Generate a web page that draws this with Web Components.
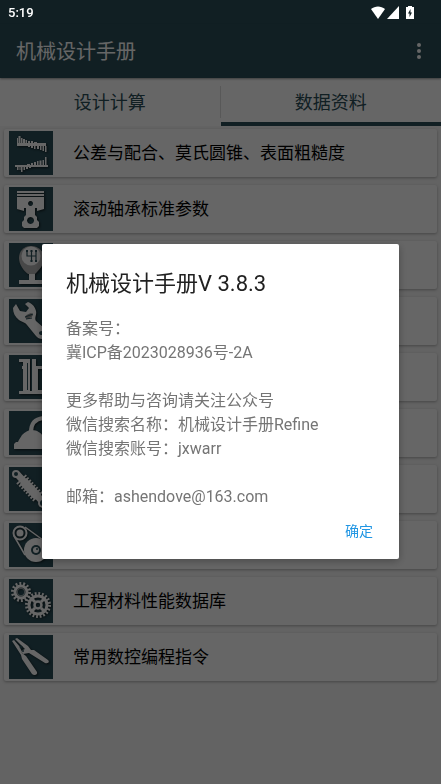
<!DOCTYPE html>
<html lang="zh-CN">
<head>
<meta charset="utf-8">
<meta name="viewport" content="width=device-width, initial-scale=1">
<title>机械设计手册</title>
<style>
  :root {
    --primary: #2b4e58;
    --surface: #ffffff;
    --page: #f7f7f7;
    --accent: #2196e3;
  }
  body {
    margin: 0;
    min-height: 100vh;
    background: var(--page);
    font-family: Roboto, "Noto Sans CJK SC", sans-serif;
  }
  main {
    display: flex;
    flex-direction: column;
    gap: 8px;
    padding: 3px 4px;
  }
</style>
</head>
<body>
<status-bar>5:19</status-bar>
<app-bar>机械设计手册</app-bar>
<tab-strip>
  <tab-item>设计计算</tab-item>
  <tab-item selected>数据资料</tab-item>
</tab-strip>
<main>
  <handbook-row icon="tolerance">公差与配合、莫氏圆锥、表面粗糙度</handbook-row>
  <handbook-row icon="piston">滚动轴承标准参数</handbook-row>
  <handbook-row icon="shifter"></handbook-row>
  <handbook-row icon="wrench"></handbook-row>
  <handbook-row icon="profile"></handbook-row>
  <handbook-row icon="eyebolt"></handbook-row>
  <handbook-row icon="shock"></handbook-row>
  <handbook-row icon="belt"></handbook-row>
  <handbook-row icon="gears">工程材料性能数据库</handbook-row>
  <handbook-row icon="pliers">常用数控编程指令</handbook-row>
</main>
<message-dialog>
  <span slot="title">机械设计手册V 3.8.3</span>
  <div>备案号：</div>
  <div>冀ICP备2023028936号-2A</div>
  <br>
  <div>更多帮助与咨询请关注公众号</div>
  <div>微信搜索名称：机械设计手册Refine</div>
  <div>微信搜索账号：jxwarr</div>
  <br>
  <div>邮箱：ashendove@163.com</div>
  <span slot="action">确定</span>
</message-dialog>

<script>
// 44x44 drawings, one per row
const ICONS = {
  tolerance: `
    <path d="M8 12h29v3H8zM6 34h33v2H6z"/>
    <path d="M8 7h1v5H8zM9.500 5h2v7h-2zM12 7h1.500v5H12zM14 8h2v4h-2zM16.500 9H18v3h-1.500zM19 10h2v2h-2zM22 10h2v2h-2zM25 11h3v1h-3z"/>
    <path d="M19 15h2v1h-2zM22 15h2v2h-2zM25 15h1.500v3H25zM28 15h2v3h-2zM31 15h1.500v4H31zM33.500 15h1.500v5h-1.500zM36 15h1.500v6H36z"/>
    <path d="M18 33h3v1h-3zM22 32h2v2h-2zM25 31h2v3h-2zM28 30h1.500v4H28zM30.500 29.500h2V34h-2zM33.500 29h1.500v5h-1.500zM36 26h1.500v8H36z"/>
    <path d="M8 36h1.500v3H8zM10.500 36h1v3h-1zM12 36h1.500v5H12zM14.500 36H16v3h-1.500zM17 36h2v2h-2zM20 36h2v1h-2z"/>`,
  piston: `
    <path d="M8 4h27v2H8zM8 7h27v2H8z"/>
    <path fill-rule="evenodd" d="M8 10h27v12l-7 2v-3h-2v7l2 2v3l2 2v4l-2 2H15l-2-2v-4l2-2v-3l2-2v-7h-2v3l-7-2zM21.500 14a2.500 2.500 0 1 0 .1 0zM21.500 30a3.500 3.500 0 1 0 .1 0z"/>`,
  shifter: `
    <path fill="#b5b5b5" d="M22 3c8 0 13 6 13 12 0 7-5 12-9 16h-7c-4-3-9-9-9-16 0-6 4-12 12-12z"/>
    <circle cx="22" cy="13" r="9.500"/>
    <path d="M20 31h6v6h10v4H10v-4h10z"/>
    <path class="cut" stroke-width="1.200" d="M18 8v5h9M22.500 8v10M27 8v10"/>
    <path class="hole" d="M17 7h2v2h-2zM21.500 7h2v2h-2zM26 7h2v2h-2zM21.500 17h2v2h-2zM26 17h2v2h-2z"/>`,
  wrench: `
    <path d="M7 5 4 9c0 5 2 9 6 12 3 2 6 2 8 5l9 11c3 4 9 4 11 0 1-3 0-6-3-8l-8-7c-2-3 1-6 0-10-1-4-3-7-8-9l-3 2 4 4-3 4-6-1z"/>
    <ellipse cx="20" cy="17" rx="4" ry="2" transform="rotate(-25 20 17)" fill="#888"/>
    <path class="cut" d="M16 18l8-3M17 20l6-1"/>
    <ellipse class="hole" cx="33" cy="34" rx="3" ry="2"/>`,
  profile: `
    <path d="M10 4h11v32h1V4h5v7h7v3h-5v21h5v4H10v-3h4V14h-1v-3h1V7h-4z"/>
    <path class="hole" d="M18 8h1v27h-1zM22 4h1v32h-1z"/>`,
  eyebolt: `
    <path d="M5 38v-5l2-2h2c1-3 3-5 4-7 3-3 6-5 10-5 5 0 9 3 11 6 2 2 3 4 4 6h6v7z"/>
    <path d="M22 21C22 13 26 8 34 7" fill="none" stroke="#fff" stroke-width="4"/>`,
  shock: `
    <path d="M8 7l24 26" stroke="#fff" stroke-width="7"/>
    <path d="M14 14l15 16" stroke="#fff" stroke-width="9"/>
    <path d="M12 12l17 18" stroke="#fff" stroke-width="13" stroke-dasharray="1.800 1.500"/>
    <circle cx="7" cy="7" r="4"/><circle class="hole" cx="7" cy="7" r="2"/>
    <circle cx="34" cy="36" r="5"/><circle class="hole" cx="34" cy="36" r="3"/>`,
  belt: `
    <circle cx="11" cy="10" r="6.500" fill="none" stroke="#fff" stroke-width="2"/>
    <circle cx="11" cy="10" r="3.500"/>
    <circle cx="27" cy="27" r="12"/>
    <path d="M5 13l11 19M16 4l18 13" fill="none" stroke="#fff" stroke-width="1.500"/>
    <circle class="hole" cx="27" cy="27" r="5"/>
    <circle cx="27" cy="27" r="3"/><circle class="hole" cx="28" cy="26" r="1"/>`,
  gears: `
    <g fill="none" stroke="#fff">
      <circle cx="12" cy="13" r="6" stroke-width="3"/>
      <circle cx="12" cy="13" r="8.500" stroke-width="3" stroke-dasharray="1.900 1.915"/>
      <circle cx="12" cy="13" r="3.800" stroke-width=".6"/>
      <circle cx="29" cy="26" r="9" stroke-width="3"/>
      <circle cx="29" cy="26" r="11.500" stroke-width="3" stroke-dasharray="1.800 1.813"/>
      <circle cx="29" cy="26" r="3.500" stroke-width="2.500"/>
      <path stroke-width="3" d="M22 19l4 4M32 29l4 4M36 19l-4 4M26 29l-4 4"/>
    </g>`,
  pliers: `
    <path d="M3 6l2-1 6 7 2 6 4 3 11 16c1 3-3 4-5 2L13 24l-1-4z"/>
    <path d="M6 4l2-1 11 8 3 4h3l14 10c2 2 0 4-3 3L20 18l-6 1-2-3 4-2-3-3z"/>
    <circle class="hole" cx="12" cy="12" r="1.500"/><circle class="hole" cx="14" cy="16" r="1"/>`
};

class StatusBar extends HTMLElement {
  constructor() {
    super();
    this.attachShadow({ mode: 'open' });
    this.shadowRoot.innerHTML = `
      <style>
        :host {
          display: block;
          background: var(--primary);
          height: 24px;
        }
        /* the clock and signals stay bright above the scrim */
        .bar {
          position: relative;
          z-index: 3;
          display: flex;
          align-items: center;
          justify-content: space-between;
          height: 24px;
          padding: 0 27px 0 8px;
          color: #fff;
          font-size: 13px;
          font-weight: 500;
        }
        .signals { display: flex; align-items: center; gap: 2px; }
        svg { display: block; fill: #fff; }
        svg:last-child { margin-left: 5px; }
      </style>
      <div class="bar">
        <slot></slot>
        <div class="signals">
          <svg width="14" height="13" viewBox="0 0 14 13"><path d="M0 3C4-.5 10-.5 14 3L7 13z"/></svg>
          <svg width="12" height="13" viewBox="0 0 12 13"><path d="M12 0v13H0z"/></svg>
          <svg width="8" height="13" viewBox="0 0 8 13"><path fill-rule="evenodd" d="M2 0h4v1h2v12H0V1h2zM4.500 3 2 7.500h1.500V11L6 6.500H4.500z"/></svg>
        </div>
      </div>
    `;
  }
}

class AppBar extends HTMLElement {
  constructor() {
    super();
    this.attachShadow({ mode: 'open' });
    this.shadowRoot.innerHTML = `
      <style>
        :host {
          display: flex;
          align-items: center;
          justify-content: space-between;
          height: 54px;
          padding: 0 12px 0 16px;
          background: var(--primary);
          box-shadow: 0 1px 2px rgba(0, 0, 0, .4);
          position: relative;
        }
        h1 {
          margin: 0;
          padding-top: 2px;
          color: #fff;
          font-size: 20px;
          font-weight: 400;
          line-height: 24px;
        }
        button {
          display: flex;
          width: 20px;
          height: 32px;
          padding: 0;
          border: 0;
          background: none;
          align-items: center;
          justify-content: center;
        }
      </style>
      <h1><slot></slot></h1>
      <button type="button" aria-label="更多">
        <svg width="4" height="16" viewBox="0 0 4 16" fill="#fff">
          <circle cx="2" cy="2" r="2"/><circle cx="2" cy="8" r="2"/><circle cx="2" cy="14" r="2"/>
        </svg>
      </button>
    `;
  }
}

class TabStrip extends HTMLElement {
  constructor() {
    super();
    this.attachShadow({ mode: 'open' });
    this.shadowRoot.innerHTML = `
      <style>
        :host { display: flex; height: 48px; background: var(--surface); }
        ::slotted(*) { flex: 1; }
      </style>
      <slot></slot>
    `;
  }
}

class TabItem extends HTMLElement {
  constructor() {
    super();
    this.attachShadow({ mode: 'open' });
    this.shadowRoot.innerHTML = `
      <style>
        :host { display: flex; align-items: center; }
        button {
          flex: 1;
          height: 48px;
          padding: 6px 0 0;
          border: 0;
          border-bottom: 4px solid transparent;
          background: none;
          color: var(--primary);
          font: inherit;
          font-size: 18px;
          line-height: 24px;
        }
        :host([selected]) button { border-color: var(--primary); }
        :host(:not([selected]))::after {
          content: "";
          width: 1px;
          height: 32px;
          background: #ddd;
        }
      </style>
      <button type="button"><slot></slot></button>
    `;
  }
}

class HandbookRow extends HTMLElement {
  constructor() {
    super();
    this.attachShadow({ mode: 'open' });
  }

  connectedCallback() {
    this.shadowRoot.innerHTML = `
      <style>
        :host { display: block; }
        a {
          display: flex;
          align-items: center;
          gap: 20px;
          height: 48px;
          padding: 0 5px;
          border-radius: 2px;
          background: var(--surface);
          box-shadow: 0 1px 3px rgba(0, 0, 0, .3);
          color: #000;
          font-size: 17px;
          line-height: 24px;
          text-decoration: none;
        }
        svg { flex: none; background: var(--primary); }
        g.art { fill: #fff; filter: drop-shadow(1px 1px 1px rgba(0, 0, 0, .6)); }
        .hole { fill: var(--primary); }
        .cut { fill: none; stroke: var(--primary); }
      </style>
      <a href="#">
        <svg width="44" height="44" viewBox="0 0 44 44"><g class="art">${ICONS[this.getAttribute('icon')]}</g></svg>
        <slot></slot>
      </a>
    `;
  }
}

class MessageDialog extends HTMLElement {
  constructor() {
    super();
    this.attachShadow({ mode: 'open' });
    this.shadowRoot.innerHTML = `
      <style>
        :host {
          position: fixed;
          inset: 0;
          z-index: 2;
          display: grid;
          align-items: center;
          padding: 18px 42px 0;
          background: rgba(0, 0, 0, .6);
        }
        section {
          padding: 24px 24px 11px;
          border-radius: 2px;
          background: #fff;
          box-shadow: 0 2px 8px rgba(0, 0, 0, .3);
        }
        h2 {
          margin: 0 0 17px;
          color: #212121;
          font-size: 22px;
          font-weight: 400;
          line-height: 32px;
        }
        .message { color: #757575; font-size: 16px; line-height: 24px; }
        footer { display: flex; justify-content: flex-end; margin-top: 3px; }
        button {
          height: 36px;
          padding: 0 2px;
          border: 0;
          background: none;
          color: var(--accent);
          font: inherit;
          font-size: 14px;
        }
      </style>
      <section role="dialog" aria-modal="true" aria-labelledby="title">
        <h2 id="title"><slot name="title"></slot></h2>
        <div class="message"><slot></slot></div>
        <footer><button type="button"><slot name="action"></slot></button></footer>
      </section>
    `;
  }
}

customElements.define('status-bar', StatusBar);
customElements.define('app-bar', AppBar);
customElements.define('tab-strip', TabStrip);
customElements.define('tab-item', TabItem);
customElements.define('handbook-row', HandbookRow);
customElements.define('message-dialog', MessageDialog);
</script>
</body>
</html>
